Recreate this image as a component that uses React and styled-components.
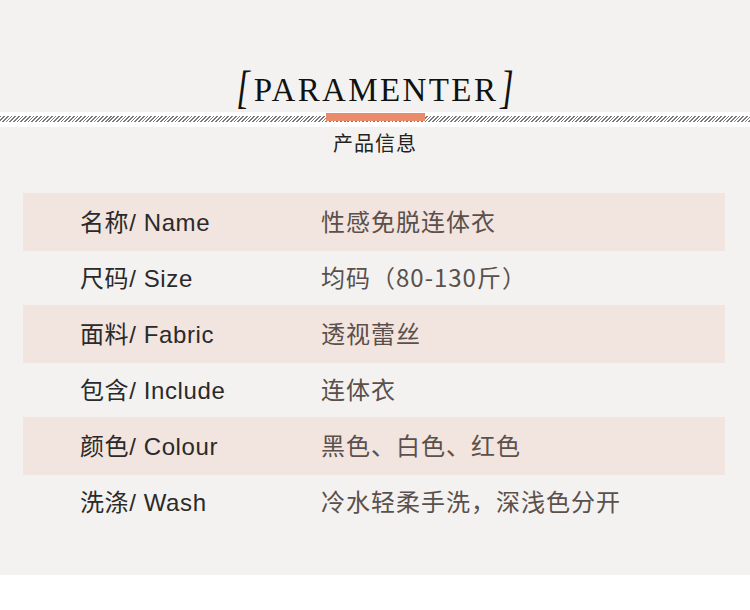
import React from "react";
import styled, { createGlobalStyle } from "styled-components";

const Global = createGlobalStyle`
  html, body { margin: 0; padding: 0; background: #ffffff; }
  body { font-family: "Liberation Sans", "Noto Sans CJK SC", sans-serif; }
`;

const Page = styled.div`
  width: 750px;
  height: 575px;
  background: #f3f2f0;
  display: flex;
  flex-direction: column;
  align-items: stretch;
  padding-top: 64px;
  box-sizing: border-box;
`;

const Title = styled.h1`
  margin: 0;
  height: 48px;
  display: flex;
  justify-content: center;
  align-items: center;
  font-family: "Liberation Serif", "Times New Roman", serif;
  font-weight: normal;
  color: #111;
`;

const Bracket = styled.span`
  font-size: 46px;
  font-style: italic;
  line-height: 1;
  transform: scaleX(0.75);
  display: inline-block;
  margin: ${(p) => (p.$side === "left" ? "0 2px 0 0" : "0 0 0 0")};
`;

const TitleText = styled.span`
  font-size: 33px;
  letter-spacing: 2.4px;
  line-height: 1;
  padding-top: 5px;
  display: inline-block;
`;

const Band = styled.div`
  height: 15px;
  background: #ffffff;
  display: flex;
  align-items: center;
  justify-content: center;
  position: relative;
`;

const Hatch = styled.div`
  position: absolute;
  left: 0;
  right: 0;
  top: 3.5px;
  height: 6px;
  background: repeating-linear-gradient(
    135deg,
    #7a7a7a 0px,
    #7a7a7a 1.2px,
    #ffffff 1.2px,
    #ffffff 2.6px
  );
`;

const Accent = styled.div`
  position: relative;
  width: 99px;
  height: 8px;
  margin-top: -5px;
  background: #e98c6b;
`;

const Subtitle = styled.div`
  text-align: center;
  margin-top: 2px;
  font-family: "Noto Sans CJK SC", sans-serif;
  font-size: 20px;
  letter-spacing: 1px;
  line-height: 28px;
  color: #222;
`;

const Table = styled.div`
  margin: 36px 25px 0 23px;
  display: flex;
  flex-direction: column;
`;

const Row = styled.div`
  display: grid;
  grid-template-columns: 241px 1fr;
  align-items: center;
  padding-left: 57px;
  padding-bottom: 3px;
  box-sizing: border-box;
  height: ${(p) => (p.$shaded ? "58px" : "54px")};
  background: ${(p) => (p.$shaded ? "#f2e4df" : "transparent")};
`;

const Label = styled.div`
  font-family: "Liberation Sans", "Noto Sans CJK SC", sans-serif;
  font-size: 24px;
  letter-spacing: 0.6px;
  color: #2a2a2a;
`;

const Value = styled.div`
  font-family: "Noto Sans CJK SC", sans-serif;
  font-size: 24px;
  letter-spacing: 1px;
  color: #5a504c;
`;

const rows = [
  ["名称/ Name", "性感免脱连体衣"],
  ["尺码/ Size", "均码（80-130斤）"],
  ["面料/ Fabric", "透视蕾丝"],
  ["包含/ Include", "连体衣"],
  ["颜色/ Colour", "黑色、白色、红色"],
  ["洗涤/ Wash", "冷水轻柔手洗，深浅色分开"],
];

export default function App() {
  return (
    <>
      <Global />
      <Page>
        <Title>
          <Bracket $side="left">[</Bracket>
          <TitleText>PARAMENTER</TitleText>
          <Bracket $side="right">]</Bracket>
        </Title>
        <Band>
          <Hatch />
          <Accent />
        </Band>
        <Subtitle>产品信息</Subtitle>
        <Table>
          {rows.map(([l, v], i) => (
            <Row key={l} $shaded={i % 2 === 0}>
              <Label>{l}</Label>
              <Value>{v}</Value>
            </Row>
          ))}
        </Table>
      </Page>
    </>
  );
}
